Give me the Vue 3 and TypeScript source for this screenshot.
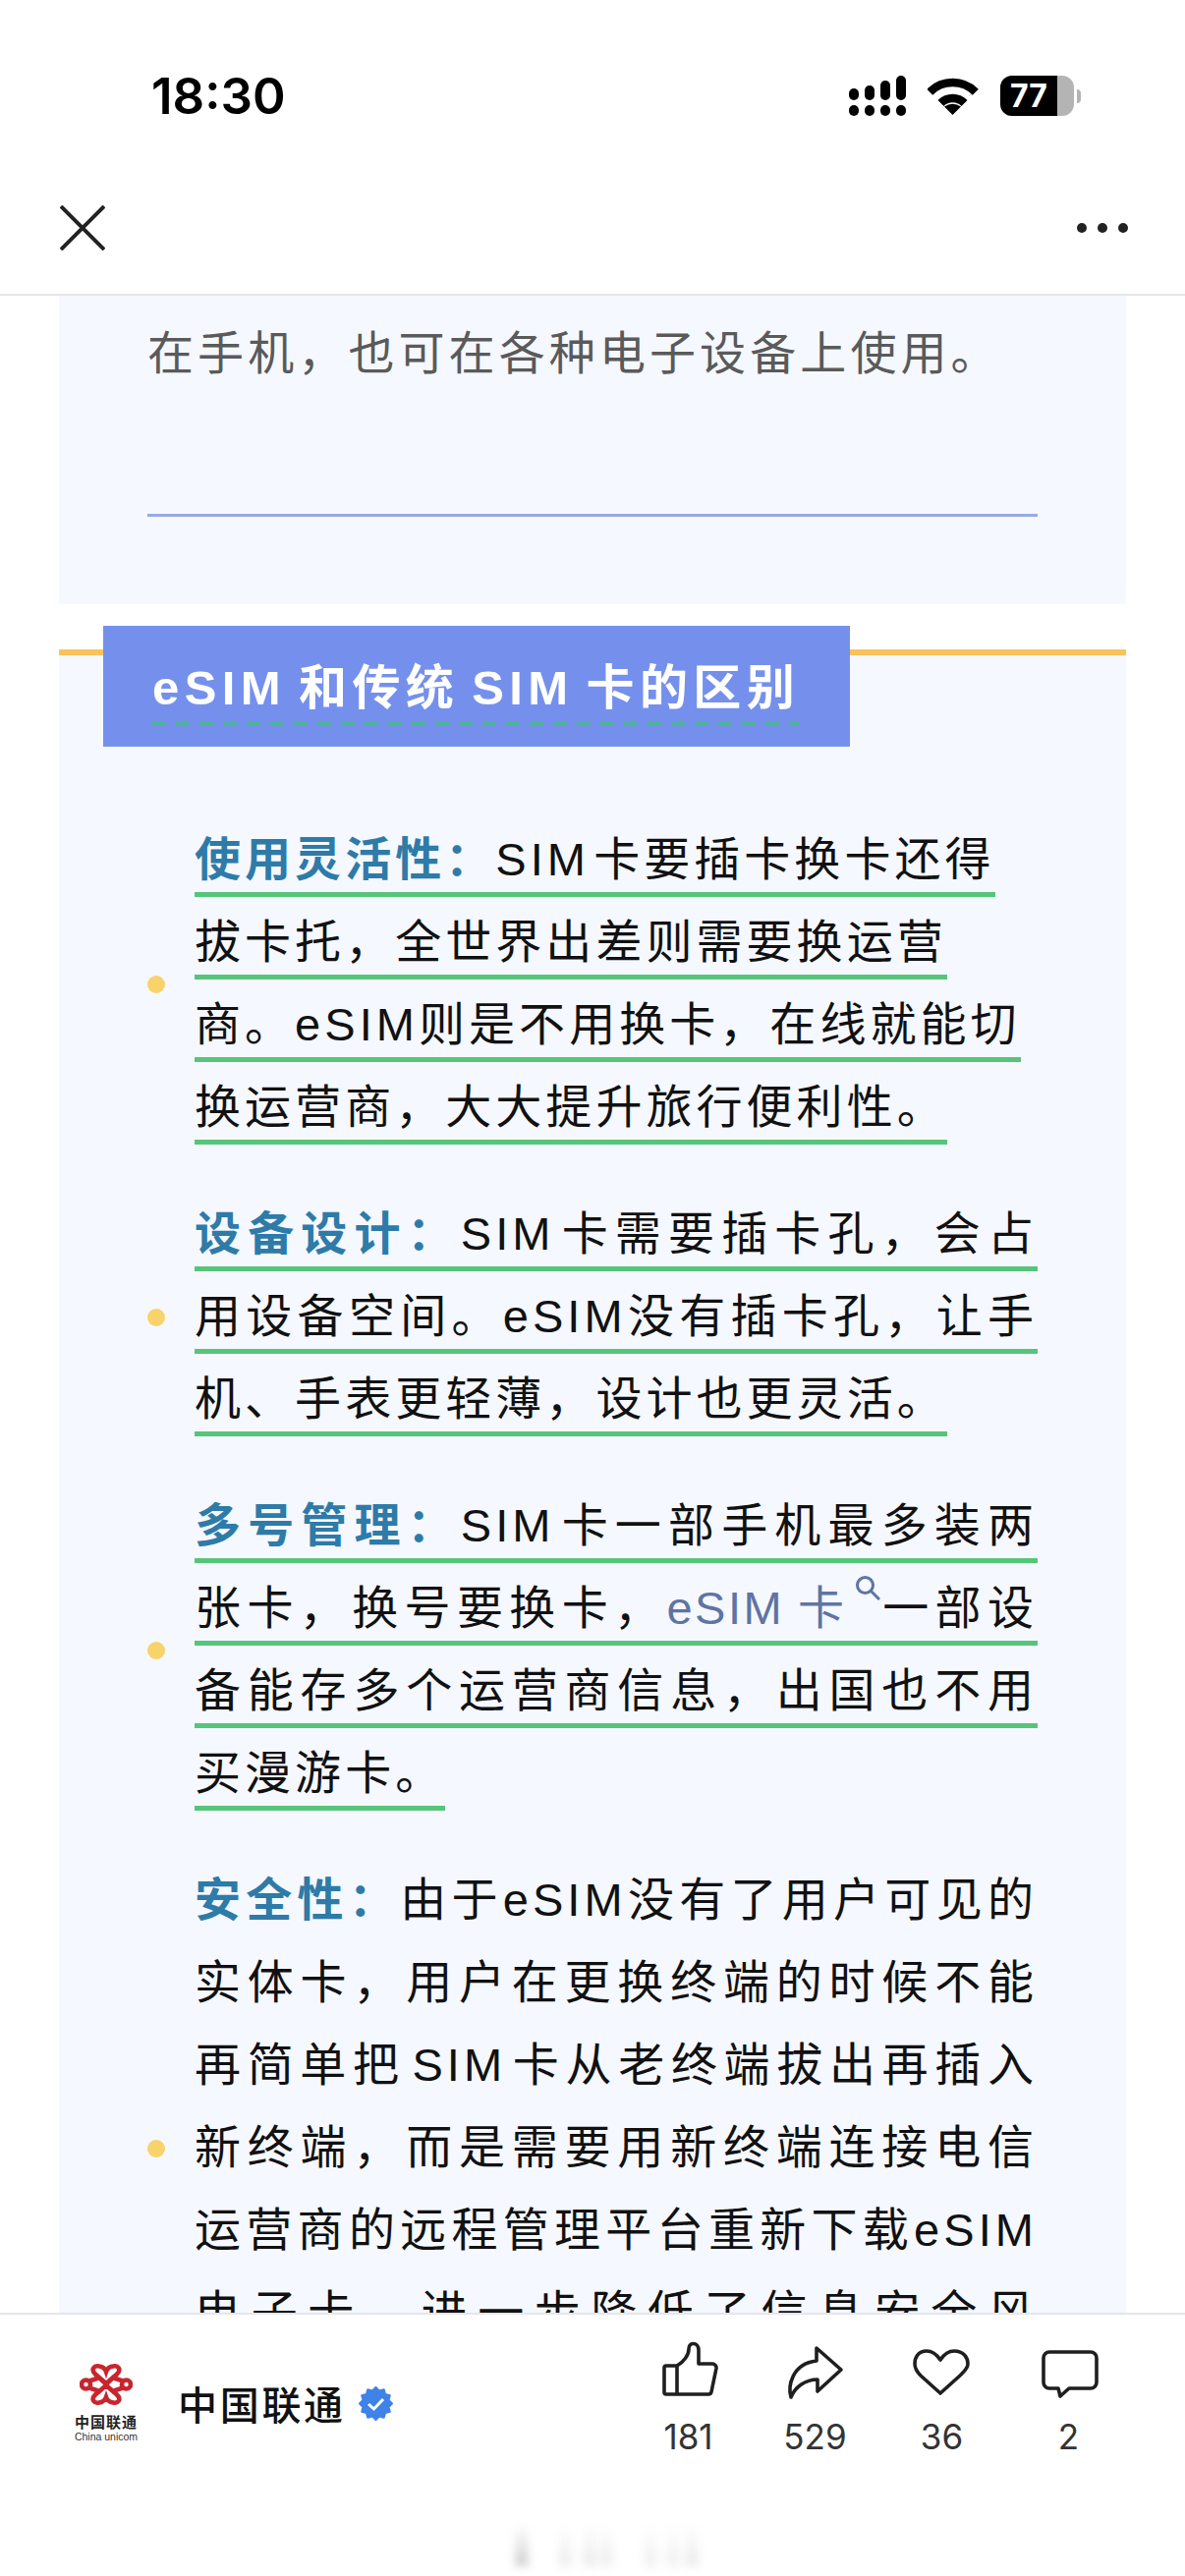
<template>
  <div class="phone">
    <!-- barra de estado -->
    <header class="status">
      <span class="time">18:30</span>
      <div class="status-icons">
        <svg class="signal" width="58" height="41" viewBox="15 17 58 41">
          <rect v-for="b in signalBars" :key="b.x + '-' + b.y" :x="b.x" :y="b.y" width="10" :height="b.h" rx="5" fill="#000" />
        </svg>
        <svg class="wifi" width="52" height="40" viewBox="95 17 52 40">
          <path d="M97.2 32.7A33 33 0 0 1 143.8 32.7" fill="none" stroke="#000" stroke-width="8.500" />
          <path d="M108.5 44A17 17 0 0 1 132.5 44" fill="none" stroke="#000" stroke-width="8.500" />
          <path d="M120.5 56L112 47.5Q120.5 42 129 47.5Z" fill="#000" />
        </svg>
        <div class="battery">
          <div class="battery-body"><div class="battery-fill">77</div></div>
          <div class="battery-tip"></div>
        </div>
      </div>
    </header>

    <nav class="nav">
      <svg width="46" height="46" viewBox="0 0 46 46">
        <path d="M1 1L45 45M45 1L1 45" stroke="#222" stroke-width="4" fill="none" />
      </svg>
      <div class="more"><i></i><i></i><i></i></div>
    </nav>

    <main class="scroller">
      <section class="intro">
        <p class="intro-text">在手机，也可在各种电子设备上使用。</p>
        <div class="intro-rule"></div>
      </section>

      <section class="diff">
        <h2 class="diff-title"><span>eSIM 和传统 SIM 卡的区别</span></h2>
        <ul class="diff-list">
          <li v-for="item in items" :key="item.id" class="diff-item" :class="{ clipped: !item.underlined }">
            <span class="bullet"></span>
            <div class="lines" :class="{ underlined: item.underlined }">
              <div v-for="(line, i) in item.lines" :key="i" class="line" :class="{ justify: line.justify }">
                <span v-if="line.lead" class="lead">{{ line.lead }}</span>
                <template v-if="line.link">
                  <span>{{ line.before }}</span>
                  <span class="link">{{ line.link }}<svg class="search" width="26" height="26" viewBox="0 0 26 26"><circle cx="10.5" cy="10.5" r="8" fill="none" stroke="#5f74a3" stroke-width="3" /><path d="M16.5 16.5L25 25" stroke="#5f74a3" stroke-width="3" /></svg></span>
                </template>
                <span>{{ line.text }}</span>
              </div>
            </div>
          </li>
        </ul>
      </section>
    </main>

    <footer class="bottom">
      <div class="account">
        <div class="logo">
          <svg width="54" height="42" viewBox="0 0 54 42" fill="none" stroke="#c9252f" stroke-width="4.600">
            <path d="M27 20L16 10.500C11 5.500 15 1.500 20 2.500C23 3 26 5 27 8C28 5 31 3 34 2.500C39 1.500 43 5.500 38 10.500L27 20" />
            <path d="M27 22L16 31.500C11 36.500 15 40.500 20 39.500C23 39 26 37 27 34C28 37 31 39 34 39.500C39 40.500 43 36.500 38 31.500L27 22" />
            <circle cx="6.500" cy="21" r="4.500" />
            <circle cx="47.500" cy="21" r="4.500" />
            <path d="M10 17.500L19 14.500M10 24.500L19 27.500M44 17.500L35 14.500M44 24.500L35 27.500" />
            <path d="M19 14L34 28M35 14L20 28" stroke-width="3.600" />
          </svg>
          <span class="logo-cn">中国联通</span>
          <span class="logo-en">China unicom</span>
        </div>
        <span class="name">中国联通</span>
        <svg class="badge" width="35" height="35" viewBox="0 0 35 35">
          <polygon :points="badgePoints" fill="#3f82e8" stroke="#3f82e8" stroke-width="2" stroke-linejoin="round" />
          <path d="M10 18L15.500 23L25 13" fill="none" stroke="#fff" stroke-width="3" />
        </svg>
      </div>
      <div class="actions">
        <div class="action">
          <svg class="action-icon" viewBox="11 12 60 62"><path d="M29 38H18a2 2 0 0 0-2 2v25a2 2 0 0 0 2 2h43a3 3 0 0 0 3-2.500l5-24a4 4 0 0 0-4-4.500H51V22c0-4-2.500-6.500-5.500-6.500S41 18 41 21c0 6-5 13-12 17v29" /></svg>
          <span>181</span>
        </div>
        <div class="action">
          <svg class="action-icon" viewBox="141 12 60 62"><path d="M172 33V20L197 42L173 64V52C160 52 150 60 146 70C143 60 146 36 172 33Z" /></svg>
          <span>529</span>
        </div>
        <div class="action">
          <svg class="action-icon" viewBox="270 12 60 62"><path d="M298 32C294 26 289 23 284 23C275 23 272 30 272 36C272 41 274 44 278 48L298 66L318 48C322 44 326 41 326 36C326 30 322 23 312 23C307 23 302 26 298 32Z" /></svg>
          <span>36</span>
        </div>
        <div class="action">
          <svg class="action-icon" viewBox="398 12 60 62"><path d="M408 24H450a6 6 0 0 1 6 6V55a6 6 0 0 1-6 6H428L419 69L417 61H408a6 6 0 0 1-6-6V30a6 6 0 0 1 6-6Z" /></svg>
          <span>2</span>
        </div>
      </div>
      <div class="smudge">
        <i v-for="s in smudges" :key="s.gap" :style="{ marginLeft: s.gap + 'px', opacity: s.alpha }"></i>
      </div>
    </footer>
  </div>
</template>

<script setup lang="ts">
interface Line {
  lead?: string;
  before?: string;
  link?: string;
  text: string;
  justify?: boolean;
}

interface Item {
  id: string;
  underlined: boolean;
  lines: Line[];
}

const signalBars = [
  { x: 15, y: 47, h: 11 },
  { x: 31, y: 47, h: 11 },
  { x: 47, y: 47, h: 11 },
  { x: 63, y: 47, h: 11 },
  { x: 15, y: 30, h: 12 },
  { x: 31, y: 27, h: 15 },
  { x: 47, y: 22, h: 20 },
  { x: 63, y: 17, h: 25 },
];

const items: Item[] = [
  {
    id: 'flex',
    underlined: true,
    lines: [
      { lead: '使用灵活性：', text: 'SIM 卡要插卡换卡还得' },
      { text: '拔卡托，全世界出差则需要换运营' },
      { text: '商。eSIM则是不用换卡，在线就能切' },
      { text: '换运营商，大大提升旅行便利性。' },
    ],
  },
  {
    id: 'design',
    underlined: true,
    lines: [
      { lead: '设备设计：', text: 'SIM 卡需要插卡孔，会占', justify: true },
      { text: '用设备空间。eSIM没有插卡孔，让手', justify: true },
      { text: '机、手表更轻薄，设计也更灵活。' },
    ],
  },
  {
    id: 'numbers',
    underlined: true,
    lines: [
      { lead: '多号管理：', text: 'SIM 卡一部手机最多装两', justify: true },
      { before: '张卡，换号要换卡，', link: 'eSIM 卡', text: '一部设', justify: true },
      { text: '备能存多个运营商信息，出国也不用', justify: true },
      { text: '买漫游卡。' },
    ],
  },
  {
    id: 'security',
    underlined: false,
    lines: [
      { lead: '安全性：', text: '由于eSIM没有了用户可见的', justify: true },
      { text: '实体卡，用户在更换终端的时候不能', justify: true },
      { text: '再简单把 SIM 卡从老终端拔出再插入', justify: true },
      { text: '新终端，而是需要用新终端连接电信', justify: true },
      { text: '运营商的远程管理平台重新下载eSIM', justify: true },
      { text: '电子卡，进一步降低了信息安全风', justify: true },
    ],
  },
];

// franjas borrosas de la parte inferior
const smudges = [
  { gap: 24, alpha: 0.8 },
  { gap: 30, alpha: 0.3 },
  { gap: 11, alpha: 0.35 },
  { gap: 3, alpha: 0.3 },
  { gap: 31, alpha: 0.25 },
  { gap: 9, alpha: 0.25 },
  { gap: 5, alpha: 0.35 },
];

// estrella de 12 puntas para la insignia verificada
const badgePoints = Array.from({ length: 24 }, (_, i) => {
  const r = i % 2 === 0 ? 16.5 : 13.5;
  const a = (Math.PI * i) / 12;
  return `${(17.5 + r * Math.sin(a)).toFixed(2)},${(17.5 - r * Math.cos(a)).toFixed(2)}`;
}).join(' ');
</script>

<style>
html,
body {
  margin: 0;
  background: #fff;
}
</style>

<style scoped>
.phone {
  width: 1206px;
  height: 2622px;
  display: flex;
  flex-direction: column;
  overflow: hidden;
  background: #fff;
  font-family: "Liberation Sans", "Noto Sans CJK SC", sans-serif;
  color: #111;
}

.status {
  height: 175px;
  flex: none;
  display: flex;
  justify-content: space-between;
  align-items: flex-start;
  padding: 77px 106px 0 154px;
  box-sizing: border-box;
}

.time {
  font-family: Inter, sans-serif;
  font-size: 51px;
  font-weight: 600;
  line-height: 41px;
  color: #000;
}

.status-icons {
  display: flex;
  align-items: center;
  gap: 22px;
}

.battery {
  display: flex;
  align-items: center;
  gap: 3px;
}

.battery-body {
  width: 75px;
  height: 41px;
  border-radius: 12px;
  overflow: hidden;
  background: #b4b4b4;
}

.battery-fill {
  width: 58px;
  height: 100%;
  background: #000;
  color: #fff;
  font-family: Inter, sans-serif;
  font-weight: 700;
  font-size: 32px;
  line-height: 41px;
  text-align: center;
}

.battery-tip {
  width: 4px;
  height: 14px;
  border-radius: 0 4px 4px 0;
  background: #b4b4b4;
}

.nav {
  height: 126px;
  flex: none;
  display: flex;
  justify-content: space-between;
  align-items: center;
  padding: 0 58px 10px 61px;
  box-sizing: border-box;
  border-bottom: 2px solid #e6e6ea;
}

.more {
  display: flex;
  gap: 11px;
}

.more i {
  width: 10px;
  height: 10px;
  border-radius: 50%;
  background: #222;
}

.scroller {
  flex: 1;
  min-height: 0;
  overflow: hidden;
  padding: 0 60px;
}

.intro {
  height: 314px;
  box-sizing: border-box;
  padding: 17px 90px 0;
  background: #f5f8ff;
}

.intro-text {
  margin: 0;
  font-size: 47px;
  letter-spacing: 4.1px;
  line-height: 84px;
  color: #5a5a5a;
}

.intro-rule {
  height: 3px;
  margin-top: 121px;
  background: #98a9e4;
}

.diff {
  margin-top: 46px;
  padding-bottom: 100px;
  border-top: 6px solid #f8c35c;
  background: #f5f8ff;
}

.diff-title {
  width: 760px;
  height: 123px;
  box-sizing: border-box;
  margin: -30px 0 0 45px;
  padding: 32px 0 0 50px;
  background: #7590ec;
  color: #fff;
  font-size: 49px;
  font-weight: 700;
  letter-spacing: 5.4px;
  word-spacing: -6px;
  line-height: 62px;
}

.diff-title span {
  display: inline-block;
  height: 70px;
  background: repeating-linear-gradient(90deg, #4fb39a 0 14px, transparent 14px 24px) left bottom / 100% 5px no-repeat;
}

.diff-list {
  list-style: none;
  margin: 69px 0 0;
  padding: 0;
  display: flex;
  flex-direction: column;
  gap: 45px;
}

.diff-item {
  display: flex;
  align-items: center;
  padding: 0 90px;
}

/* la última fila sigue bajo la barra inferior */
.diff-item.clipped {
  min-height: 588px;
}

.bullet {
  flex: none;
  width: 18px;
  height: 18px;
  margin: 10px 30px 0 0;
  border-radius: 50%;
  background: #f8d26b;
}

.lines {
  flex: 1;
  min-width: 0;
  align-self: flex-start;
}

.line {
  height: 84px;
  padding-top: 6px;
  line-height: 79px;
  font-size: 47px;
  letter-spacing: 4.05px;
  word-spacing: -13px;
  white-space: nowrap;
  box-sizing: border-box;
  width: fit-content;
  border-bottom: 5px solid transparent;
}

.underlined .line {
  border-bottom-color: #56c57a;
}

.line.justify {
  width: auto;
  white-space: normal;
  text-align: justify;
  text-align-last: justify;
}

.lead {
  font-weight: 700;
  color: #2e7ba8;
}

.link {
  color: #5f74a3;
  letter-spacing: 2.5px;
  word-spacing: -4px;
}

.search {
  vertical-align: 24px;
  margin-left: 6px;
}

.bottom {
  position: relative;
  height: 268px;
  flex: none;
  box-sizing: border-box;
  border-top: 2px solid #e6e6ea;
  background: #fff;
  display: flex;
  justify-content: space-between;
  align-items: flex-start;
  padding: 26px 54px 0 76px;
}

.account {
  display: flex;
  align-items: center;
  padding-top: 24px;
}

.logo {
  width: 64px;
  display: flex;
  flex-direction: column;
  align-items: center;
}

.logo-cn {
  margin-top: 10px;
  font-size: 15px;
  font-weight: 700;
  line-height: 16px;
  white-space: nowrap;
  letter-spacing: 1px;
  color: #222;
}

.logo-en {
  font-size: 10.5px;
  line-height: 12px;
  white-space: nowrap;
  color: #333;
}

.name {
  margin-left: 41px;
  font-size: 40px;
  letter-spacing: 2.7px;
  font-weight: 500;
  color: #111;
}

.badge {
  margin-left: 13px;
}

.actions {
  display: grid;
  grid-template-columns: repeat(4, 129px);
}

.action {
  display: flex;
  flex-direction: column;
  align-items: center;
  font-family: Inter, sans-serif;
  font-size: 35px;
  line-height: 44px;
  color: #333;
}

.action-icon {
  width: 60px;
  height: 62px;
  margin-bottom: 14px;
  fill: none;
  stroke: #1f1f1f;
  stroke-width: 3.6;
  stroke-linejoin: round;
  stroke-linecap: round;
}

.smudge {
  position: absolute;
  left: 500px;
  top: 214px;
  display: flex;
}

.smudge i {
  width: 14px;
  height: 42px;
  background: linear-gradient(#fff, #c4c4c4);
  filter: blur(4px);
}
</style>
